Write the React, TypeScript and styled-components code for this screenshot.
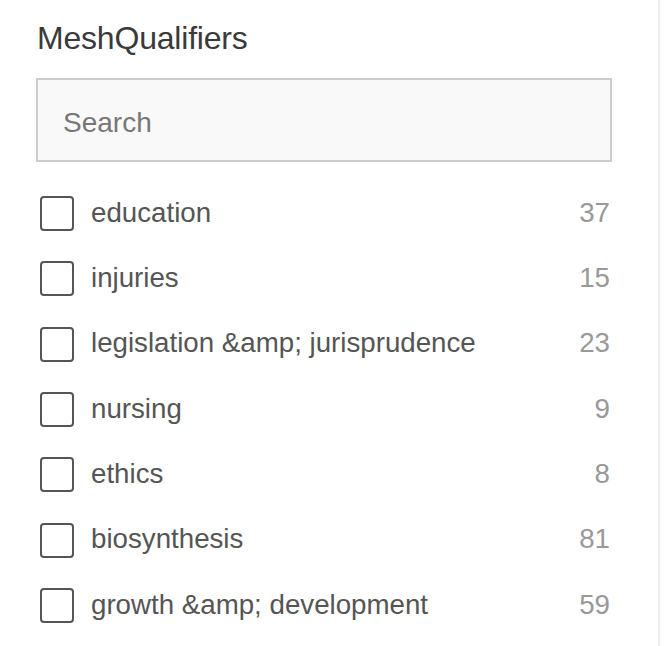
import React from "react";
import styled, { createGlobalStyle } from "styled-components";

const Global = createGlobalStyle`
  html, body { margin: 0; padding: 0; background: #fff; }
  body { font-family: "Liberation Sans", Arial, sans-serif; }
`;

const Panel = styled.div`
  width: 660px;
  height: 646px;
  box-sizing: border-box;
  border-right: 2px solid #eeeeee;
  padding: 20px 48px 0 36px;
`;

const Title = styled.h2`
  margin: 0 0 0 1px;
  font-size: 32px;
  font-weight: 400;
  line-height: 36px;
  color: #3a3a3a;
  letter-spacing: -0.2px;
`;

const SearchInput = styled.input`
  display: block;
  box-sizing: border-box;
  width: 576px;
  height: 84px;
  margin-top: 22px;
  padding: 5px 25px 0;
  border: 2px solid #cccccc;
  background: #f9f9f9;
  font-family: "Liberation Sans", Arial, sans-serif;
  font-size: 28px;
  color: #333;
  outline: none;
  &::placeholder { color: #777777; }
`;

const List = styled.ul`
  list-style: none;
  margin: 19px 0 0 0;
  padding: 0;
`;

const Row = styled.li`
  display: flex;
  align-items: center;
  height: 65.33px;
`;

const Box = styled.span`
  flex: none;
  box-sizing: border-box;
  width: 34px;
  height: 35px;
  margin-left: 4px;
  border: 2px solid #555555;
  border-radius: 4px;
  background: #fff;
`;

const Label = styled.span`
  flex: 1;
  margin-left: 17px;
  font-size: 27.7px;
  color: #555555;
  white-space: nowrap;
  position: relative;
  top: -1px;
`;

const Count = styled.span`
  font-size: 27.7px;
  color: #999999;
  position: relative;
  top: -1px;
`;

const items: [string, number][] = [
  ["education", 37],
  ["injuries", 15],
  ["legislation &amp; jurisprudence", 23],
  ["nursing", 9],
  ["ethics", 8],
  ["biosynthesis", 81],
  ["growth &amp; development", 59],
];

export default function App() {
  return (
    <>
      <Global />
      <Panel>
        <Title>MeshQualifiers</Title>
        <SearchInput placeholder="Search" />
        <List>
          {items.map(([label, n]) => (
            <Row key={label}>
              <Box />
              <Label>{label}</Label>
              <Count>{n}</Count>
            </Row>
          ))}
        </List>
      </Panel>
    </>
  );
}
